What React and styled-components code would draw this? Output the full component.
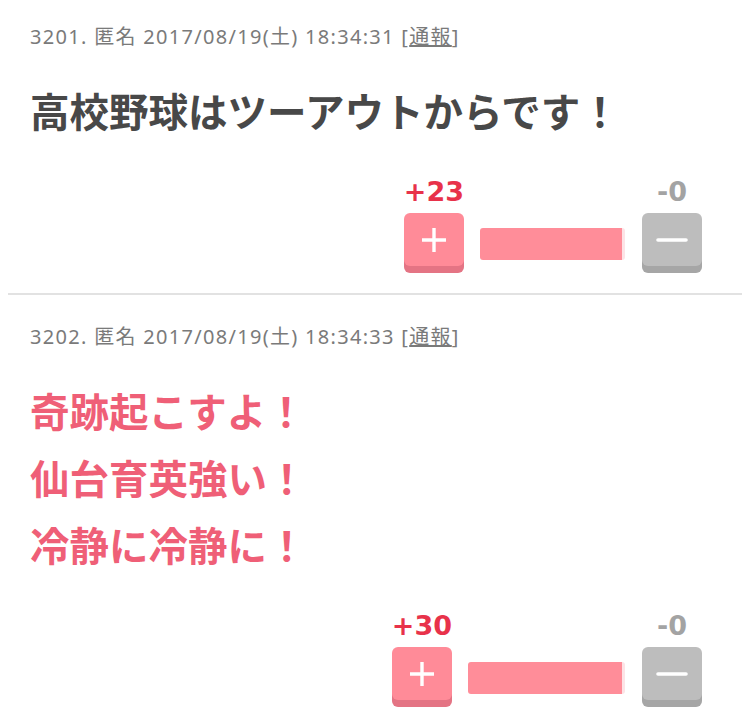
import styled, { createGlobalStyle } from "styled-components";

const GlobalStyle = createGlobalStyle`
  body {
    margin: 0;
    background: #fff;
    font-family: "Noto Sans CJK JP", "Noto Sans", sans-serif;
  }
`

const Thread = styled.main`
  display: flex;
  flex-direction: column;
`

const Post = styled.article`
  margin: 0 8px;
  padding: 29px 40px 20px 22px;
  border-bottom: 2px solid #e2e2e2;
  &:first-child {
    padding-top: 24px;
  }
  &:last-child {
    border-bottom: none;
  }
`

const Meta = styled.div`
  font-family: "Noto Sans", "Noto Sans CJK JP", sans-serif;
  font-size: 20px;
  line-height: 26px;
  letter-spacing: 1.3px;
  color: #7a7a7a;
  a {
    color: #7a7a7a;
    text-decoration: underline;
  }
`

const Body = styled.div`
  margin-top: 26px;
  font-size: 39.5px;
  line-height: 67px;
  font-weight: 700;
  color: ${(props) => (props.hot ? "#ef5f77" : "#484848")};
`

const Votes = styled.div`
  margin-top: 34px;
  display: flex;
  justify-content: flex-end;
  align-items: flex-end;
`

const VoteCol = styled.div`
  display: flex;
  flex-direction: column;
  align-items: center;
  gap: 6px;
  padding-bottom: 7px;
`

const Count = styled.span`
  font-family: "DejaVu Sans", "Noto Sans", sans-serif;
  font-size: 27px;
  line-height: 30px;
  font-weight: 700;
  color: ${(props) => (props.plus ? "#e8324a" : "#a3a3a3")};
`

const VoteButton = styled.button`
  width: 60px;
  height: 53px;
  border: none;
  border-radius: 6px;
  padding: 0;
  display: flex;
  align-items: center;
  justify-content: center;
  cursor: pointer;
  background: ${(props) => (props.plus ? "#ff8b98" : "#bdbdbd")};
  box-shadow: 0 7px 0 ${(props) => (props.plus ? "#e47484" : "#a6a6a6")};
`

const Track = styled.div`
  display: flex;
  height: 32px;
  margin: 0 17px 13px 16px;
  border-radius: 3px;
  overflow: hidden;
`

const Fill = styled.div`
  height: 100%;
  background: ${(props) => (props.plus ? "#ff8d99" : "#fde3e6")};
`

const Plus = () => (
  <svg width="28" height="28" viewBox="0 0 28 28">
    <path d="M14 2v24M2 14h24" stroke="#fff" strokeWidth="3.4" />
  </svg>
)

const Minus = () => (
  <svg width="32" height="28" viewBox="0 0 32 28">
    <path d="M2 14h28" stroke="#fff" strokeWidth="3.6" strokeLinecap="round" />
  </svg>
)

const posts = [
  {
    no: 3201,
    time: "18:34:31",
    lines: ["高校野球はツーアウトからです！"],
    hot: false,
    up: 23,
    down: 0,
    bar: 145,
  },
  {
    no: 3202,
    time: "18:34:33",
    lines: ["奇跡起こすよ！", "仙台育英強い！", "冷静に冷静に！"],
    hot: true,
    up: 30,
    down: 0,
    bar: 157,
  },
]

const App = () => {
  return (
    <>
      <GlobalStyle />
      <Thread>
        {posts.map((p) => (
          <Post key={p.no}>
            <Meta>
              {p.no}. 匿名 2017/08/19(土) {p.time} [<a href="#">通報</a>]
            </Meta>
            <Body hot={p.hot}>
              {p.lines.map((l) => (
                <div key={l}>{l}</div>
              ))}
            </Body>
            <Votes>
              <VoteCol>
                <Count plus>+{p.up}</Count>
                <VoteButton plus><Plus /></VoteButton>
              </VoteCol>
              <Track style={{ width: p.bar }}>
                <Fill plus style={{ flex: 1 }} />
                <Fill style={{ width: 3 }} />
              </Track>
              <VoteCol>
                <Count>-{p.down}</Count>
                <VoteButton><Minus /></VoteButton>
              </VoteCol>
            </Votes>
          </Post>
        ))}
      </Thread>
    </>
  )
}

export default App;
